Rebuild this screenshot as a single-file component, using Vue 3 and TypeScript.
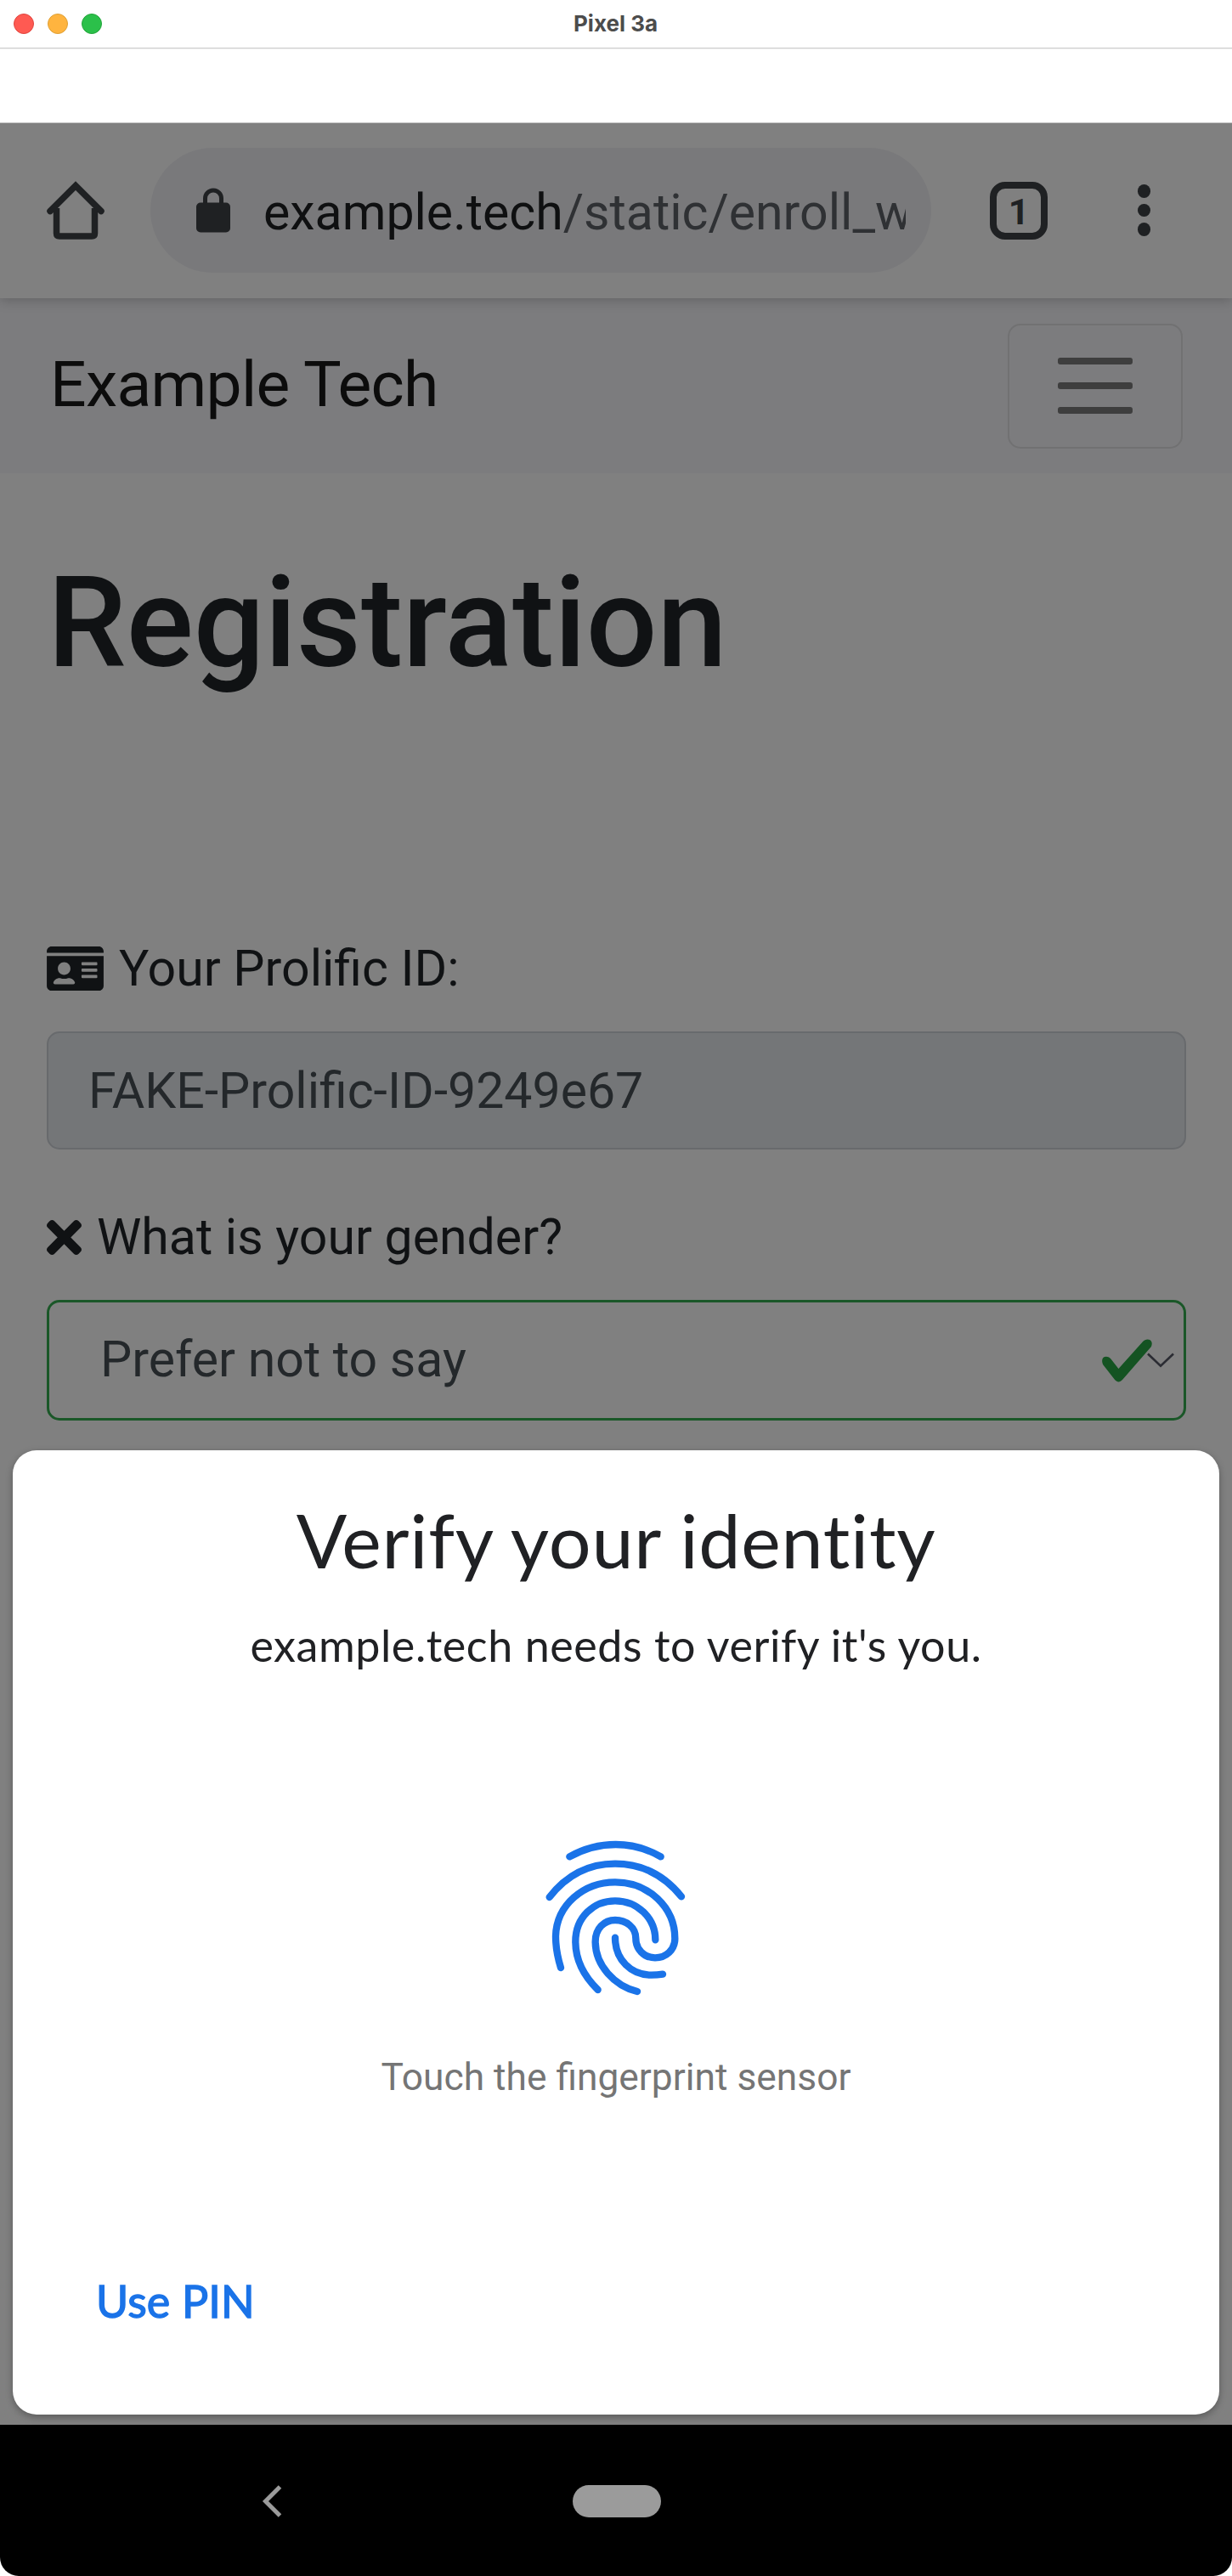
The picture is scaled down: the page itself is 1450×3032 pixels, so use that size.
<script setup lang="ts">
const trafficLights: string[] = ['close', 'minimise', 'zoom']
const siteHost = 'example.tech'
const sitePath = '/static/enroll_w'
const prolificId = 'FAKE-Prolific-ID-9249e67'
</script>

<template>
  <div class="window">
    <header class="titlebar">
      <div class="lights">
        <span v-for="light in trafficLights" :key="light" class="light" :class="light"></span>
      </div>
      <span class="window-title">Pixel 3a</span>
    </header>
    <div class="status-space"></div>

    <main class="screen">
      <div class="toolbar">
        <svg class="home" viewBox="0 0 68 68" fill="none" stroke="#1f2123" stroke-width="7.5">
          <path d="M11.5 31V60.500q0 3.500 3.500 3.500h38q3.500 0 3.500-3.500V31" />
          <path d="M4 34.500L34 4.500l30 30" stroke-linecap="round" />
        </svg>
        <div class="url-pill">
          <svg class="lock" viewBox="0 0 40 53">
            <path d="M10.500 20V12.500a9.500 9.500 0 0 1 19 0V20" fill="none" stroke="#1f2123" stroke-width="5" />
            <rect x="0" y="17.500" width="40" height="35" rx="5" fill="#1f2123" />
          </svg>
          <div class="url"><span class="host">{{ siteHost }}</span>{{ sitePath }}</div>
        </div>
        <div class="tab-count">1</div>
        <div class="more"><i></i><i></i><i></i></div>
      </div>

      <nav class="navbar">
        <span class="brand">Example Tech</span>
        <button class="toggler" type="button"><i></i><i></i><i></i></button>
      </nav>

      <section class="form">
        <h1>Registration</h1>
        <div class="label">
          <svg class="id-card" viewBox="0 32 576 448" fill="currentColor">
            <path d="M528 32H48C21.500 32 0 53.500 0 80v16h576V80c0-26.500-21.500-48-48-48zM0 432c0 26.500 21.500 48 48 48h480c26.500 0 48-21.500 48-48V128H0v304zm352-232c0-4.400 3.600-8 8-8h144c4.400 0 8 3.600 8 8v16c0 4.400-3.600 8-8 8H360c-4.400 0-8-3.600-8-8v-16zm0 64c0-4.400 3.600-8 8-8h144c4.400 0 8 3.600 8 8v16c0 4.400-3.600 8-8 8H360c-4.400 0-8-3.600-8-8v-16zm0 64c0-4.400 3.600-8 8-8h144c4.400 0 8 3.600 8 8v16c0 4.400-3.600 8-8 8H360c-4.400 0-8-3.600-8-8v-16zM176 192c35.300 0 64 28.700 64 64s-28.700 64-64 64-64-28.700-64-64 28.700-64 64-64zM67.100 396.200C75.500 370.500 99.600 352 128 352h8.200c12.300 5.100 25.700 8 39.800 8s27.600-2.900 39.800-8h8.200c28.400 0 52.500 18.500 60.900 44.200 3.200 9.900-5.200 19.800-15.600 19.800H82.700c-10.400 0-18.800-10-15.600-19.800z" />
          </svg>
          <span>Your Prolific ID:</span>
        </div>
        <div class="field readonly">{{ prolificId }}</div>
        <div class="label second">
          <svg class="times" viewBox="0 80 352 352" fill="currentColor">
            <path d="M242.720 256l100.070-100.070c12.280-12.280 12.280-32.190 0-44.480l-22.240-22.240c-12.280-12.280-32.190-12.280-44.480 0L176 189.280 75.930 89.210c-12.280-12.280-32.190-12.280-44.480 0L9.210 111.450c-12.280 12.280-12.280 32.190 0 44.480L109.280 256 9.210 356.070c-12.280 12.280-12.280 32.190 0 44.480l22.240 22.240c12.280 12.280 32.200 12.280 44.480 0L176 322.720l100.070 100.070c12.280 12.280 32.200 12.280 44.480 0l22.240-22.240c12.280-12.280 12.280-32.190 0-44.480L242.720 256z" />
          </svg>
          <span>What is your gender?</span>
        </div>
        <div class="field select">
          <span class="choice">Prefer not to say</span>
          <div class="marks">
            <svg class="check" viewBox="0 0 8 8" fill="#145322">
              <path d="M2.300 6.730L.6 4.530c-.4-1.040.46-1.400 1.100-.8l1.100 1.400 3.400-3.800c.6-.63 1.600-.27 1.200.7l-4 4.600c-.43.500-.8.400-1.100.1z" />
            </svg>
            <svg class="caret" viewBox="0 0 32 18" fill="none" stroke="#2b2c33" stroke-width="2.600">
              <path d="M1 1.500L16 15.700 31 1.500" />
            </svg>
          </div>
        </div>
      </section>
    </main>

    <footer class="system-nav">
      <svg class="back" viewBox="0 0 24 38" fill="none" stroke="#9b9b9b" stroke-width="5">
        <path d="M20.500 2L3.500 19l17 17" />
      </svg>
      <span class="home-pill"></span>
    </footer>

    <div class="sheet" role="dialog">
      <h2>Verify your identity</h2>
      <p class="message">example.tech needs to verify it's you.</p>
      <svg class="fingerprint" viewBox="0 0 750 750" fill="none" stroke="#1a73e8" stroke-width="25" stroke-linecap="round">
        <path d="M211 166Q289 123 374 123Q458 123 533 166" />
        <path d="M140 309Q232 191 372 191Q512 191 606 307" />
        <path d="M180 558C162 500 162 470 162 447C165 335 262 256 372 256C490 256 583 345 583 455C583 495 552 523 513 523C474 523 445 493 445 455C445 415 411 390 372 390C333 390 302 420 302 466C302 550 370 622 450 642" />
        <path d="M311 636C262 588 232 530 232 466C232 380 296 322 372 322C450 322 514 382 514 460" />
        <path d="M372 452C372 530 428 584 500 584Q520 584 540 581" />
      </svg>
      <p class="hint">Touch the fingerprint sensor</p>
      <button class="use-pin" type="button">Use PIN</button>
    </div>
  </div>
</template>

<style>
body {
  background: #fff;
}
</style>

<style scoped>
* {
  box-sizing: border-box;
}
svg {
  display: block;
  flex: none;
  overflow: visible;
}
button {
  font: inherit;
  padding: 0;
  background: none;
  border: 0;
}
.window {
  position: relative;
  width: 1450px;
  height: 3032px;
  overflow: hidden;
  background: #fff;
  font-family: Roboto, sans-serif;
}
.titlebar {
  display: grid;
  grid-template-columns: 1fr auto 1fr;
  align-items: center;
  height: 58px;
  padding: 0 16px 1px;
  border-bottom: 1px solid #ececec;
  box-shadow: inset 0 -1px #cfcfcf;
}
.lights {
  display: flex;
  gap: 16px;
}
.light {
  width: 24px;
  height: 24px;
  border-radius: 50%;
}
.close {
  background: #ff5a52;
  border: 1px solid #e0443e;
}
.minimise {
  background: #ffb43f;
  border: 1px solid #dea035;
}
.zoom {
  background: #2bc04a;
  border: 1px solid #22a43a;
}
.window-title {
  margin: 0 1px 1px 0;
  font: 700 26px/50px Inter, sans-serif;
  color: #4c4c4c;
}
.status-space {
  height: 87px;
  border-bottom: 1px solid #c4c4c4;
}
.screen {
  height: 2709px;
  overflow: hidden;
  background: #808080;
}
.toolbar {
  position: relative;
  display: flex;
  align-items: center;
  height: 206px;
  padding: 0 0 1px 55px;
  background: #808080;
  box-shadow: 0 2px 14px rgba(0, 0, 0, 0.22);
  color: #1f2123;
}
.home {
  width: 68px;
  height: 68px;
}
.url-pill {
  display: flex;
  align-items: center;
  width: 919px;
  height: 147px;
  margin-left: 54px;
  padding: 0 30px 0 54px;
  border-radius: 74px;
  background: #79797b;
}
.lock {
  width: 40px;
  height: 53px;
}
.url {
  flex: 1;
  margin-left: 39px;
  padding-top: 4px;
  overflow: hidden;
  white-space: nowrap;
  font-size: 59px;
  line-height: 90px;
  color: #2f3134;
}
.host {
  color: #0f1011;
}
.tab-count {
  width: 68px;
  height: 68px;
  margin-left: 69px;
  border: 8px solid #1f2123;
  border-radius: 18px;
  font-size: 43px;
  font-weight: 700;
  line-height: 54px;
  text-align: center;
}
.more {
  display: flex;
  flex-direction: column;
  gap: 7px;
  margin-left: 106px;
}
.more i {
  width: 15px;
  height: 15.500px;
  border-radius: 50%;
  background: #1f2123;
}
.navbar {
  display: flex;
  justify-content: space-between;
  align-items: center;
  height: 206px;
  padding: 0 58px 0 59px;
  background: #7c7c7e;
}
.brand {
  margin-bottom: 4px;
  font-size: 75px;
  line-height: 110px;
  letter-spacing: -0.7px;
  color: #0c0c0c;
}
.toggler {
  display: flex;
  flex-direction: column;
  justify-content: center;
  align-items: center;
  gap: 21px;
  width: 206px;
  height: 147px;
  border: 2px solid #717172;
  border-radius: 15px;
}
.toggler i {
  width: 88px;
  height: 8px;
  border-radius: 3px;
  background: #3e3e3e;
}
.form {
  padding: 77px 54px 0 55px;
  color: #101214;
}
h1 {
  height: 200px;
  margin: 0 0 0 1px;
  font-size: 147.500px;
  font-weight: 500;
  line-height: 200px;
}
.label {
  display: flex;
  align-items: center;
  height: 90px;
  margin-top: 261px;
  font-size: 59px;
  line-height: 90px;
}
.label.second {
  margin-top: 58px;
}
.id-card {
  width: 67px;
  height: 52px;
  margin-right: 18px;
}
.times {
  width: 41px;
  height: 41px;
  margin-right: 18px;
}
.field {
  display: flex;
  align-items: center;
  height: 139px;
  margin-top: 29px;
  border: 2px solid #686a6d;
  border-radius: 15px;
  color: #24282b;
  font-size: 59px;
  line-height: 90px;
}
.readonly {
  padding-left: 47px;
  background: #747678;
}
.select {
  justify-content: space-between;
  height: 142px;
  padding: 0 11px 0 60px;
  border: 3px solid #1a5728;
}
.choice {
  margin-bottom: 2px;
}
.marks {
  display: flex;
  align-items: center;
}
.check {
  width: 67px;
  height: 67px;
}
.caret {
  width: 32px;
  height: 18px;
  margin-left: -10px;
}
.system-nav {
  display: flex;
  align-items: center;
  height: 178px;
  padding: 1px 0 0 309px;
  background: #000;
  border-radius: 0 0 22px 22px;
}
.back {
  width: 24px;
  height: 38px;
}
.home-pill {
  width: 104px;
  height: 38px;
  margin-left: 341px;
  border-radius: 19px;
  background: #9b9b9b;
}
.sheet {
  position: absolute;
  left: 15px;
  right: 15px;
  top: 1707px;
  height: 1134.500px;
  display: flex;
  flex-direction: column;
  align-items: center;
  padding-top: 45px;
  border-radius: 28px;
  background: #fff;
  box-shadow: 0 3px 8px rgba(0, 0, 0, 0.3);
  color: #202124;
}
h2 {
  margin: 0;
  font: 400 88px/120px Lato, sans-serif;
  font-variant-ligatures: none;
  letter-spacing: 0.75px;
}
.message {
  margin: 24px 0 0;
  font: 400 52px/80px Lato, sans-serif;
  letter-spacing: 0.57px;
}
.fingerprint {
  width: 250px;
  height: 250px;
  margin-top: 154px;
}
.hint {
  margin: 35px 0 0;
  font-size: 44.300px;
  line-height: 60px;
  color: #757575;
}
.use-pin {
  align-self: flex-start;
  margin: 193px 0 0 98px;
  font: 400 52px/80px Lato, sans-serif;
  letter-spacing: 0.15px;
  -webkit-text-stroke: 1.400px #1a73e8;
  color: #1a73e8;
}
</style>
